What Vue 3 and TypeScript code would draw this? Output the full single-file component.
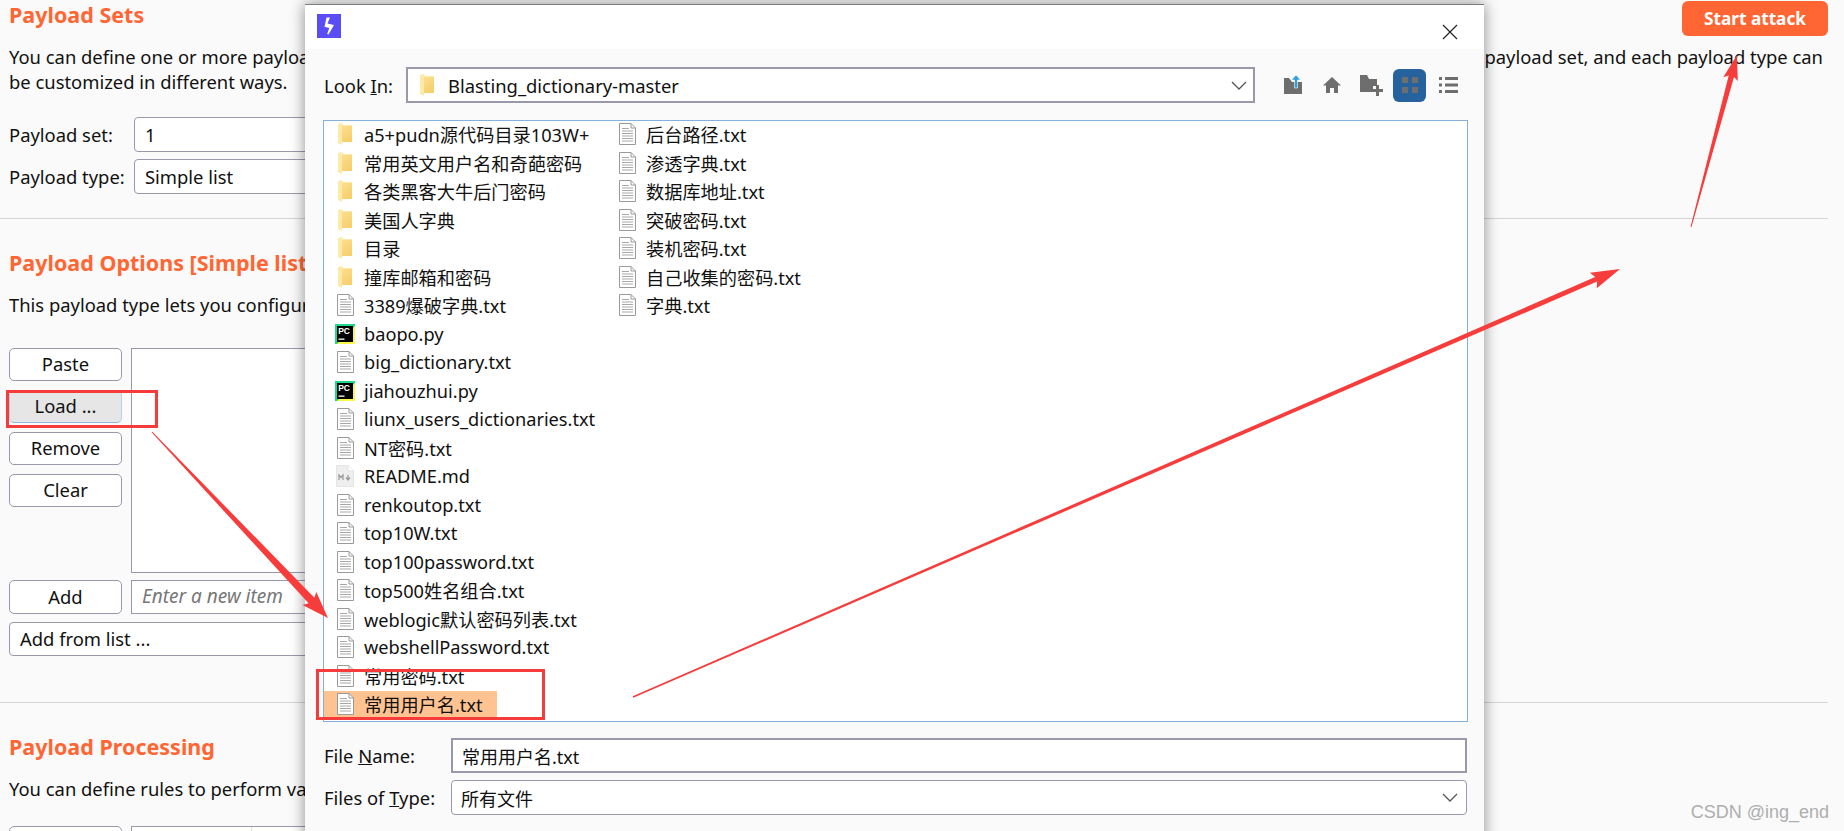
<script setup lang="ts">
type Kind = 'folder' | 'file' | 'py' | 'md'

interface Entry {
  name: string
  kind: Kind
  selected?: boolean
}

const entries: Entry[] = [
  { name: 'a5+pudn源代码目录103W+', kind: 'folder' },
  { name: '常用英文用户名和奇葩密码', kind: 'folder' },
  { name: '各类黑客大牛后门密码', kind: 'folder' },
  { name: '美国人字典', kind: 'folder' },
  { name: '目录', kind: 'folder' },
  { name: '撞库邮箱和密码', kind: 'folder' },
  { name: '3389爆破字典.txt', kind: 'file' },
  { name: 'baopo.py', kind: 'py' },
  { name: 'big_dictionary.txt', kind: 'file' },
  { name: 'jiahouzhui.py', kind: 'py' },
  { name: 'liunx_users_dictionaries.txt', kind: 'file' },
  { name: 'NT密码.txt', kind: 'file' },
  { name: 'README.md', kind: 'md' },
  { name: 'renkoutop.txt', kind: 'file' },
  { name: 'top10W.txt', kind: 'file' },
  { name: 'top100password.txt', kind: 'file' },
  { name: 'top500姓名组合.txt', kind: 'file' },
  { name: 'weblogic默认密码列表.txt', kind: 'file' },
  { name: 'webshellPassword.txt', kind: 'file' },
  { name: '常用密码.txt', kind: 'file' },
  { name: '常用用户名.txt', kind: 'file', selected: true },
  { name: '后台路径.txt', kind: 'file' },
  { name: '渗透字典.txt', kind: 'file' },
  { name: '数据库地址.txt', kind: 'file' },
  { name: '突破密码.txt', kind: 'file' },
  { name: '装机密码.txt', kind: 'file' },
  { name: '自己收集的密码.txt', kind: 'file' },
  { name: '字典.txt', kind: 'file' }
]

// tapered arrow from tail to tip, returned as polygon points
function arrow(x1: number, y1: number, x2: number, y2: number, tail: number, neck: number, headLen: number, headWidth: number): string {
  const len = Math.hypot(x2 - x1, y2 - y1)
  const ux = (x2 - x1) / len
  const uy = (y2 - y1) / len
  const nx = -uy
  const ny = ux
  const bx = x2 - ux * headLen
  const by = y2 - uy * headLen
  const pts = [
    [x1 + (nx * tail) / 2, y1 + (ny * tail) / 2],
    [bx + (nx * neck) / 2, by + (ny * neck) / 2],
    [bx + (nx * headWidth) / 2 - ux * 3, by + (ny * headWidth) / 2 - uy * 3],
    [x2, y2],
    [bx - (nx * headWidth) / 2 - ux * 3, by - (ny * headWidth) / 2 - uy * 3],
    [bx - (nx * neck) / 2, by - (ny * neck) / 2],
    [x1 - (nx * tail) / 2, y1 - (ny * tail) / 2]
  ]
  return pts.map((p) => p.map((v) => v.toFixed(1)).join(',')).join(' ')
}

const arrows = [
  arrow(152, 432, 328, 618, 1, 8, 24, 19),
  arrow(633, 697, 1620, 269, 1.5, 5, 26, 17),
  arrow(1691, 227, 1737, 55, 1, 5.5, 22, 15)
]
</script>

<template>
  <div class="page">
    <div class="main">
      <section class="first">
        <div class="head">
          <h2>Payload Sets</h2>
          <button class="start">Start attack</button>
        </div>
        <p class="intro">
          <span>You can define one or more payload sets. The number of payload sets depends on the attack type defined in the Positions tab. Various payload types are available for each</span>
          <span>payload set, and each payload type can</span>
        </p>
        <p class="intro-end">be customized in different ways.</p>
        <div class="field first-field">
          <label>Payload set:</label>
          <div class="box">1</div>
        </div>
        <div class="field">
          <label>Payload type:</label>
          <div class="box">Simple list</div>
        </div>
      </section>

      <section class="second">
        <h2>Payload Options [Simple list]</h2>
        <p class="line">This payload type lets you configure a simple list of strings that are used as payloads.</p>
        <div class="editor">
          <div class="editor-btns">
            <button class="btn">Paste</button>
            <button class="btn active">Load ...</button>
            <button class="btn">Remove</button>
            <button class="btn">Clear</button>
          </div>
          <div class="list-box"></div>
        </div>
        <div class="add-row">
          <button class="btn">Add</button>
          <div class="add-input">Enter a new item</div>
        </div>
        <div class="from-list">Add from list ...</div>
      </section>

      <section class="third">
        <h2>Payload Processing</h2>
        <p class="line">You can define rules to perform various processing tasks on each payload before it is used.</p>
        <div class="rules">
          <button class="btn">Add</button>
          <div class="rules-table"><i></i></div>
        </div>
      </section>
    </div>

    <div class="dialog">
      <div class="titlebar">
        <svg class="logo" width="24" height="24" viewBox="0 0 24 24">
          <rect width="24" height="24" fill="#5b4df5" />
          <path d="M9.5 3.5 L13 3.5 L10.5 9.5 L17 11 L11.5 20.5 L10.2 20 L12.3 14 L7.5 12.8 Z" fill="#fff" />
        </svg>
        <svg class="close" width="16" height="16" viewBox="0 0 16 16">
          <path d="M1 1 L15 15 M15 1 L1 15" stroke="#222" stroke-width="1.2" fill="none" />
        </svg>
      </div>

      <div class="dialog-body">
        <div class="look-row">
          <label class="dlg-label look-label">Look <u>I</u>n:</label>
          <div class="combo">
            <svg class="combo-folder" width="15" height="22" viewBox="0 0 15 22">
              <path d="M0 1 L4 0 L5 2 L14 2 L14 19 L4 19 L4 22 L0 20 Z" fill="#fdeaa9" />
              <path d="M4 3 L14 3 L14 19 L4 19 Z" fill="url(#folder-body)" />
            </svg>
            <span>Blasting_dictionary-master</span>
            <svg class="chev" width="16" height="9" viewBox="0 0 16 9">
              <path d="M1 1 L8 8 L15 1" stroke="#555" stroke-width="1.3" fill="none" />
            </svg>
          </div>
          <div class="tools">
            <div class="tool">
              <svg width="20" height="20" viewBox="0 0 20 20">
                <path d="M1 3 L6 3 L9 7 L19 7 L19 19 L1 19 Z" fill="#6e6e6e" />
                <path d="M11.5 13 L11.5 5 L8.5 5 L13 0 L17.5 5 L14.5 5 L14.5 13 Z" fill="#2f9fe0" stroke="#fafafa" stroke-width="0.6" />
              </svg>
            </div>
            <div class="tool">
              <svg width="18" height="18" viewBox="0 0 18 18">
                <path d="M9 1 L18 9.5 L15 9.5 L15 17 L11 17 L11 12 L7 12 L7 17 L3 17 L3 9.5 L0 9.5 Z" fill="#6e6e6e" />
              </svg>
            </div>
            <div class="tool">
              <svg width="24" height="22" viewBox="0 0 24 22">
                <path d="M1 1 L8 1 L10 5 L18 5 L18 12 L14 12 L14 18 L1 18 Z" fill="#6e6e6e" />
                <path d="M17 11 L20 11 L20 15 L24 15 L24 18 L20 18 L20 22 L17 22 L17 18 L13.5 18 L13.5 15 L17 15 Z" fill="#6e6e6e" />
              </svg>
            </div>
            <div class="tool tool-on">
              <svg width="16" height="16" viewBox="0 0 16 16">
                <path d="M0 0 H6 V6 H0 Z M10 0 H16 V6 H10 Z M0 10 H6 V16 H0 Z M10 10 H16 V16 H10 Z" fill="#6e6e6e" />
              </svg>
            </div>
            <div class="tool">
              <svg width="19" height="16" viewBox="0 0 19 16">
                <path d="M0 0 H3 V3 H0 Z M6 0 H19 V3 H6 Z M0 6.5 H3 V9.5 H0 Z M6 6.5 H19 V9.5 H6 Z M0 13 H3 V16 H0 Z M6 13 H19 V16 H6 Z" fill="#6e6e6e" />
              </svg>
            </div>
          </div>
        </div>

        <div class="files">
          <div v-for="entry in entries" :key="entry.name" class="entry" :class="{ selected: entry.selected }">
            <span class="entry-icon">
              <svg v-if="entry.kind === 'folder'" width="15" height="22" viewBox="0 0 15 22">
                <path d="M0 1 L4 0 L5 2 L14 2 L14 19 L4 19 L4 22 L0 20 Z" fill="#fdeaa9" />
                <path d="M4 3 L14 3 L14 19 L4 19 Z" fill="url(#folder-body)" />
              </svg>
              <svg v-else-if="entry.kind === 'file'" width="17" height="22" viewBox="0 0 17 22">
                <path d="M0.5 0.5 H12 L16.5 5 V21.5 H0.5 Z" fill="#fff" stroke="#9a9a9a" />
                <path d="M12 0.5 V5 H16.5" fill="none" stroke="#9a9a9a" />
                <path d="M3 5.5 H10 M3 8 H14 M3 10.5 H14 M3 13 H14 M3 15.5 H14 M3 18 H14" stroke="#a8a8a8" />
              </svg>
              <svg v-else-if="entry.kind === 'py'" width="20" height="20" viewBox="0 0 20 20">
                <rect width="20" height="20" fill="#21d789" />
                <path d="M20 2 V20 H2 Z" fill="#fcf84a" />
                <rect x="2" y="2" width="16" height="16" fill="#000" />
                <text x="3.2" y="10" class="pc">PC</text>
                <rect x="3.5" y="14.5" width="6" height="1.3" fill="#fff" />
              </svg>
              <svg v-else width="18" height="22" viewBox="0 0 18 22">
                <path d="M0.5 0.5 H12 L17.5 6 V21.5 H0.5 Z" fill="#efefef" stroke="#e4e4e4" />
                <path d="M12 0.5 V6 H17.5" fill="#fff" stroke="#e4e4e4" />
                <path d="M3 15 V10 L5 12.5 L7 10 V15 M12 10 V14 M10 12.5 L12 15 L14 12.5" fill="none" stroke="#9c9c9c" stroke-width="1.3" />
              </svg>
            </span>
            <span class="entry-name">{{ entry.name }}</span>
          </div>
        </div>

        <div class="dlg-field name-field">
          <label class="dlg-label">File <u>N</u>ame:</label>
          <div class="dlg-input">常用用户名.txt</div>
        </div>
        <div class="dlg-field">
          <label class="dlg-label">Files of <u>T</u>ype:</label>
          <div class="dlg-input rounded">
            <span>所有文件</span>
            <svg class="chev type-chev" width="16" height="9" viewBox="0 0 16 9">
              <path d="M1 1 L8 8 L15 1" stroke="#555" stroke-width="1.3" fill="none" />
            </svg>
          </div>
        </div>
      </div>
    </div>

    <!-- annotations drawn over the screenshot -->
    <svg class="marks" width="1844" height="831" viewBox="0 0 1844 831">
      <defs>
        <linearGradient id="folder-body" x1="0" y1="0" x2="0.6" y2="1">
          <stop offset="0" stop-color="#fbdf8e" />
          <stop offset="1" stop-color="#f7cf6d" />
        </linearGradient>
      </defs>
      <rect x="7.5" y="391.5" width="149" height="35" fill="none" stroke="#f63b3b" stroke-width="3" />
      <rect x="317.5" y="670.5" width="226" height="48" fill="none" stroke="#f63b3b" stroke-width="3" />
      <polygon v-for="(points, i) in arrows" :key="i" :points="points" fill="#f73c3c" />
    </svg>

    <div class="watermark">CSDN @ing_end</div>
  </div>
</template>

<style scoped>
.page {
  position: relative;
  width: 1844px;
  height: 831px;
  overflow: hidden;
  background: #fafafa;
  color: #111;
  font-family: "Noto Sans", "Noto Sans CJK SC", sans-serif;
  font-size: 18.4px;
}

.main {
  padding: 1px 16px 0 9px;
}

h2 {
  margin: 0;
  color: #ff6633;
  font-size: 21.5px;
  font-weight: 700;
  line-height: 30px;
  white-space: nowrap;
}

.head h2 {
  margin-top: -1px;
}

p {
  margin: 0;
  line-height: 26px;
}

.first {
  height: 217px;
  border-bottom: 1px solid #d4d4d4;
  margin-left: -9px;
  padding-left: 9px;
}

.head {
  display: flex;
  justify-content: space-between;
  align-items: flex-start;
  height: 35px;
}

.start {
  width: 146px;
  height: 35px;
  border: none;
  border-radius: 6px;
  background: #ff6633;
  color: #fff;
  font-family: inherit;
  font-size: 17.2px;
  font-weight: 700;
  padding: 0;
}

.intro {
  display: flex;
  justify-content: space-between;
  margin-top: 8px;
  white-space: nowrap;
  overflow: hidden;
  padding-right: 5px;
}

.intro span:first-child {
  flex: 1;
  overflow: hidden;
}

.intro-end {
  margin-top: -1px;
}

.field {
  display: flex;
  align-items: center;
  margin-top: 7px;
}

.first-field {
  margin-top: 22px;
}

.field label {
  width: 125px;
}

.box {
  width: 320px;
  height: 33px;
  line-height: 33px;
  padding-left: 10px;
  background: #fff;
  border: 1px solid #9a98ab;
  border-radius: 4px;
}

.second {
  box-sizing: border-box;
  height: 484px;
  margin-left: -9px;
  padding: 29px 0 0 9px;
  border-bottom: 1px solid #d4d4d4;
}

.line {
  margin-top: 14px;
  white-space: nowrap;
}

.editor {
  display: flex;
  gap: 9px;
  margin-top: 30px;
}

.editor-btns {
  display: flex;
  flex-direction: column;
  gap: 9px;
}

.btn {
  width: 113px;
  height: 33px;
  padding: 0 0 2px;
  background: #fff;
  border: 1px solid #9a98ab;
  border-radius: 5px;
  color: #111;
  font-family: inherit;
  font-size: 18.4px;
}

.btn.active {
  background: #e6e6e6;
  border-color: #e6e6e6 #b4cfe8 #8fb8e0;
}

.list-box {
  width: 320px;
  height: 223px;
  background: #fff;
  border: 1px solid #9a98ab;
}

.add-row {
  display: flex;
  gap: 9px;
  margin-top: 7px;
}

.add-row .btn {
  height: 34px;
}

.add-input {
  width: 320px;
  height: 32px;
  line-height: 31px;
  padding-left: 10px;
  background: #fff;
  border: 1px solid #9a98ab;
  color: #777;
  font-size: 19px;
  font-style: italic;
}

.from-list {
  width: 420px;
  height: 32px;
  line-height: 31px;
  margin-top: 8px;
  padding-left: 10px;
  background: #fff;
  border: 1px solid #9a98ab;
  border-radius: 4px;
}

.third {
  padding-top: 29px;
}

.rules {
  display: flex;
  gap: 9px;
  margin-top: 24px;
}

.rules-table {
  width: 320px;
  height: 40px;
  background: #fff;
  border: 1px solid #9a98ab;
  position: relative;
}

.rules-table i {
  position: absolute;
  left: 119px;
  top: 0;
  height: 40px;
  border-left: 1px solid #ddd;
}

/* file chooser window */
.dialog {
  position: absolute;
  left: 305px;
  top: 4px;
  width: 1179px;
  height: 860px;
  background: #fafafa;
  border-top: 1px solid #7c7c7c;
  box-sizing: border-box;
  box-shadow: 0 0 14px rgba(0, 0, 0, 0.45);
}

.titlebar {
  display: flex;
  justify-content: space-between;
  align-items: center;
  height: 44px;
  padding: 0 26px 0 12px;
  background: #fff;
}

.logo {
  margin-top: -2px;
}

.close {
  margin-top: 10px;
}

.dialog-body {
  padding: 18px 0 0 18px;
}

.look-row {
  display: flex;
  align-items: center;
  padding-left: 1px;
}

.dlg-label {
  white-space: nowrap;
}

.look-label {
  width: 82px;
}

.combo {
  display: flex;
  align-items: center;
  box-sizing: border-box;
  width: 849px;
  height: 36px;
  padding: 0 6px 0 12px;
  background: #fff;
  border: 2px solid #9a98ab;
}

.combo-folder {
  margin-right: 13px;
}

.chev {
  margin-left: auto;
}

.tools {
  display: flex;
  gap: 6px;
  margin-left: 21px;
}

.tool {
  display: flex;
  align-items: center;
  justify-content: center;
  width: 33px;
  height: 33px;
  border-radius: 6px;
}

.tool-on {
  background: #26639e;
}

.files {
  box-sizing: border-box;
  display: grid;
  grid-auto-flow: column;
  grid-template-rows: repeat(21, 26px);
  grid-template-columns: 282px 282px;
  justify-items: start;
  row-gap: 2.5px;
  width: 1145px;
  height: 602px;
  margin-top: 17px;
  background: #fff;
  border: 1px solid #84b0dc;
  font-size: 18.2px;
}

.entry {
  display: flex;
  align-items: center;
  height: 26px;
  padding-right: 14px;
  white-space: nowrap;
}

.entry.selected {
  background: #ffc291;
}

.entry-icon {
  display: flex;
  justify-content: center;
  align-items: center;
  width: 20px;
  height: 26px;
  margin-left: 11px;
  margin-right: 9px;
}

.pc {
  fill: #fff;
  font-family: "Liberation Sans", sans-serif;
  font-size: 8.5px;
  font-weight: 700;
}

.dlg-field {
  display: flex;
  align-items: center;
  margin-top: 7px;
  padding-left: 1px;
}

.name-field {
  margin-top: 16px;
}

.dlg-field .dlg-label {
  width: 127px;
}

.dlg-input {
  display: flex;
  align-items: center;
  box-sizing: border-box;
  width: 1016px;
  height: 35px;
  padding: 0 9px;
  background: #fff;
  border: 2px solid #9a98ab;
  font-size: 18px;
}

.dlg-input.rounded {
  border-width: 1px;
  border-radius: 4px;
}

.type-chev {
  margin-right: -1px;
}

.marks {
  position: absolute;
  left: 0;
  top: 0;
  pointer-events: none;
}

.watermark {
  position: absolute;
  right: 15px;
  top: 802px;
  color: #aeaeae;
  font-family: "Liberation Sans", sans-serif;
  font-size: 18px;
  line-height: 20px;
}
</style>
